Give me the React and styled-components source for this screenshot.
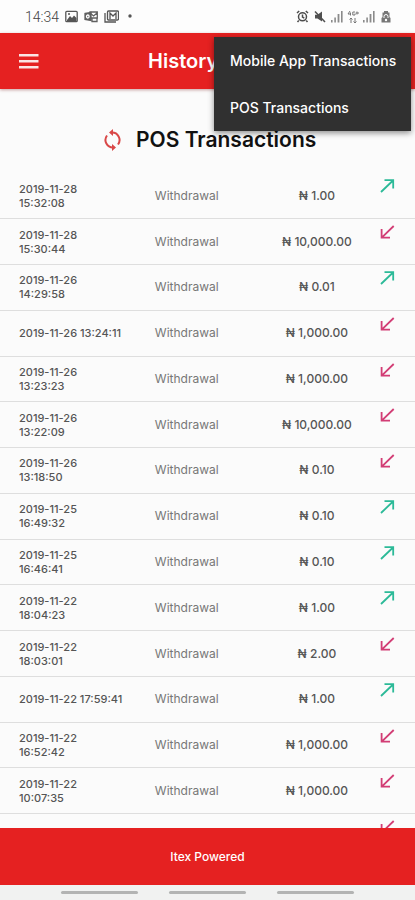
import React from "react";
import styled, { createGlobalStyle } from "styled-components";

const GlobalStyle = createGlobalStyle`
  *, *::before, *::after { box-sizing: border-box; }
  body {
    margin: 0;
    background: #fbfbfb;
    font-family: Inter, "Open Sans", sans-serif;
  }
  button { font: inherit; color: inherit; border: 0; padding: 0; background: none; cursor: pointer; }
`;

const Screen = styled.div`
  display: flex;
  flex-direction: column;
  height: 100vh;
  overflow: hidden;
  background: #fbfbfb;
`;

const StatusBar = styled.div`
  flex: none;
  display: flex;
  align-items: center;
  justify-content: space-between;
  height: 33px;
  padding: 0 22px 0 25px;
  background: #fdfdfd;
  color: #5c5c5c;
`;

const StatusGroup = styled.div`
  display: flex;
  align-items: center;
  gap: ${(p) => p.$gap}px;
`;

const Clock = styled.time`
  width: 34px;
  font: 300 14px/16px Roboto, sans-serif;
  color: #444;
`;

const Header = styled.header`
  position: relative;
  z-index: 1;
  flex: none;
  display: flex;
  align-items: center;
  height: 56px;
  padding: 0 19px;
  background: #e52121;
  color: #fff;
  box-shadow: 0 1px 3px rgba(120, 20, 20, 0.4);
`;

const MenuButton = styled.button`
  display: flex;
  width: 20px;
  height: 20px;
  align-items: center;
`;

const Title = styled.h1`
  margin: 0 0 0 109px;
  font-size: 20px;
  line-height: 24px;
  font-weight: 600;
`;

const Menu = styled.div`
  position: absolute;
  top: 4px;
  right: 4px;
  display: flex;
  flex-direction: column;
  width: 197px;
  background: #303030;
  box-shadow: 0 2px 6px rgba(0, 0, 0, 0.45);
`;

const MenuItem = styled.button`
  height: 47px;
  padding: 0 16px;
  font-size: 14px;
  font-weight: 500;
  text-align: left;
  white-space: nowrap;
`;

const Heading = styled.div`
  flex: none;
  display: flex;
  align-items: center;
  gap: 14px;
  height: 84px;
  padding: 18px 0 0 103px;
`;

const RefreshButton = styled.button`
  display: flex;
`;

const HeadingText = styled.h2`
  margin: 0;
  font-size: 21px;
  line-height: 26px;
  font-weight: 600;
  color: #111;
  white-space: nowrap;
`;

const List = styled.main`
  flex: 1;
  min-height: 0;
  overflow: hidden;
`;

const Table = styled.table`
  width: 100%;
  height: calc(100% + 32px);
  table-layout: fixed;
  border-collapse: collapse;
`;

const Row = styled.tr`
  border-bottom: 1px solid #dedede;
`;

const Cell = styled.td`
  height: 45px;
  padding: 0;
  text-align: center;
  font-size: 12px;
  line-height: 14px;
  font-weight: 500;
  color: #555;
`;

const DateCell = styled(Cell)`
  width: 31%;
  padding-left: 19px;
  text-align: left;
  white-space: nowrap;
  font-size: 11px;
`;

const TypeCell = styled(Cell)`
  width: 28%;
  font-weight: 400;
  color: #777;
`;

const AmountCell = styled(Cell)`
  padding-left: 9px;
`;

const ArrowCell = styled.td`
  width: 35px;
  padding: 6px 0 0;
  vertical-align: top;
`;

const Arrow = styled.svg`
  display: block;
  fill: none;
  stroke: ${(p) => (p.$out ? "#2cba98" : "#d23d75")};
  stroke-width: 1.8;
`;

const Line = styled.span`
  display: block;
`;

const Footer = styled.footer`
  flex: none;
  display: flex;
  align-items: center;
  justify-content: center;
  height: 57px;
  background: #e52121;
  color: #fff;
  font-size: 12px;
  font-weight: 500;
`;

const GestureBar = styled.div`
  flex: none;
  display: flex;
  align-items: center;
  justify-content: center;
  gap: 31px;
  height: 15px;
  background: #f1f2f1;
`;

const Pill = styled.span`
  width: 77px;
  height: 3px;
  border-radius: 2px;
  background: #b3b4b3;
`;

const ROWS = [
  ["2019-11-28", "15:32:08", "1.00", true],
  ["2019-11-28", "15:30:44", "10,000.00", false],
  ["2019-11-26", "14:29:58", "0.01", true],
  ["2019-11-26", "13:24:11", "1,000.00", false, true],
  ["2019-11-26", "13:23:23", "1,000.00", false],
  ["2019-11-26", "13:22:09", "10,000.00", false],
  ["2019-11-26", "13:18:50", "0.10", false],
  ["2019-11-25", "16:49:32", "0.10", true],
  ["2019-11-25", "16:46:41", "0.10", true],
  ["2019-11-22", "18:04:23", "1.00", true],
  ["2019-11-22", "18:03:01", "2.00", false],
  ["2019-11-22", "17:59:41", "1.00", true, true],
  ["2019-11-22", "16:52:42", "1,000.00", false],
  ["2019-11-22", "10:07:35", "1,000.00", false],
];

function DirectionArrow({ out }) {
  return (
    <Arrow $out={out} width="15" height="14" viewBox="0 0 15 14" role="img" aria-label={out ? "Outgoing" : "Incoming"}>
      <path d={out ? "M1 13L13 1.5M4.5 1.2H13.2V9.5" : "M13.7 1L2 12.3M1.6 4V12.7H10"} />
    </Arrow>
  );
}

function Signal() {
  return (
    <svg width="12" height="13" viewBox="0 0 12 13" fill="#8b8b8b" aria-hidden="true">
      <path d="M0 10h1.6v2.5H0zM3.3 7.5h1.6v5H3.3zM6.6 4h1.8v8.5H6.6zM10 1h1.6v11.5H10z" />
    </svg>
  );
}

function StatusIcons() {
  return (
    <StatusGroup $gap={4}>
      <svg width="13" height="13" viewBox="0 0 13 13" fill="none" stroke="#4c4c4c" strokeWidth="1.5" aria-hidden="true">
        <circle cx="6.5" cy="6.8" r="4" />
        <path d="M6.5 4.5v2.6l1.8 1M1 3l2.2-2M12 3L9.8 1M2.8 10.5L1.5 12M10.2 10.5L11.5 12" />
      </svg>
      <svg width="14" height="13" viewBox="-1 0 14 13" aria-hidden="true">
        <path d="M1 4.8h2.500L8 1.500v10L3.500 8.500H1z" fill="#505050" />
        <path d="M1 1.500l10 10.500" stroke="#505050" strokeWidth="1.5" />
      </svg>
      <Signal />
      <svg width="12" height="14" viewBox="0 0 12 14" fill="none" stroke="#777" aria-hidden="true">
        <path d="M3 1L1 4h3M3.5 2.5v3M8 2H5.8v3H8V3.5M10 1.5v3M8.7 3H12" />
        <path d="M4 13V8M2.5 9.5L4 8l1.5 1.5M8 8v5M6.5 11.5L8 13l1.5-1.5" />
      </svg>
      <Signal />
      <svg width="14" height="13" viewBox="-1 0 14 13" aria-hidden="true">
        <path d="M4 1h4v1.500h1.500V7l1 1v4.500h-9V8l1-1V2.500H4z" fill="#777" />
        <path d="M4 8V6.500a2 2 0 0 1 4 0V8" fill="none" stroke="#fff" />
        <circle cx="6" cy="10" r="1.2" fill="#fff" />
      </svg>
    </StatusGroup>
  );
}

function NotificationIcons() {
  return (
    <StatusGroup $gap={6}>
      <Clock>14:34</Clock>
      <svg width="13" height="13" viewBox="0 0 13 13" aria-hidden="true">
        <rect x="0.8" y="1.3" width="11.4" height="10.4" rx="1" fill="none" stroke="#555" strokeWidth="1.3" />
        <path d="M2 10l3-4 2 2 2-2.500 2.500 2.500V11H2z" fill="#555" />
        <circle cx="4" cy="4" r="1" fill="#555" />
      </svg>
      <svg width="14" height="13" viewBox="0 0 14 13" fill="none" stroke="#606060" strokeWidth="1.3" aria-hidden="true">
        <path d="M6 2h7.300v6H6zM6 3l3.600 3L13 3M8 8v3.500h5V8" />
        <path d="M1 3.500l6-1v8l-6-1z" fill="#606060" />
        <ellipse cx="3.8" cy="6.5" rx="1.3" ry="1.5" stroke="#fff" />
      </svg>
      <svg width="15" height="13" viewBox="0 0 15 13" fill="none" stroke="#555" strokeWidth="1.3" aria-hidden="true">
        <rect x="3.5" y="1" width="11" height="9" rx="1" />
        <path d="M1 3v9h11M6 9V3l3 3 3-3v6" />
      </svg>
      <svg width="15" height="13" viewBox="0 0 15 13" aria-hidden="true">
        <circle cx="5" cy="6" r="1.7" fill="#555" />
      </svg>
    </StatusGroup>
  );
}

export default function App() {
  return (
    <Screen>
      <GlobalStyle />
      <StatusBar>
        <NotificationIcons />
        <StatusIcons />
      </StatusBar>
      <Header>
        <MenuButton aria-label="Open navigation">
          <svg width="20" height="15" viewBox="0 0 20 15" fill="#fbe4e4">
            <path d="M0 0h19.500v2.500H0zM0 6h19.500v2.500H0zM0 12h19.500v2.500H0z" />
          </svg>
        </MenuButton>
        <Title>History</Title>
        <Menu role="menu">
          <MenuItem role="menuitem">Mobile App Transactions</MenuItem>
          <MenuItem role="menuitem">POS Transactions</MenuItem>
        </Menu>
      </Header>
      <Heading>
        <RefreshButton aria-label="Refresh">
          <svg width="19" height="22" viewBox="0 0 19 22" fill="none" stroke="#d94848" strokeWidth="2">
            <path d="M8.5 3.5A7.5 7.5 0 0 1 15 15.5M10.5 18.5A7.5 7.5 0 0 1 4 6.5" />
            <path d="M10 0v7L6 3.500zM9 15v7l4-3.500z" fill="#d94848" stroke="none" />
          </svg>
        </RefreshButton>
        <HeadingText>POS Transactions</HeadingText>
      </Heading>
      <List>
        <Table aria-label="POS Transactions">
          <tbody>
            {ROWS.map(([date, time, amount, out, single]) => (
              <Row key={date + time}>
                <DateCell>
                  {single ? (
                    `${date} ${time}`
                  ) : (
                    <>
                      <Line>{date}</Line>
                      <Line>{time}</Line>
                    </>
                  )}
                </DateCell>
                <TypeCell>Withdrawal</TypeCell>
                <AmountCell>₦ {amount}</AmountCell>
                <ArrowCell>
                  <DirectionArrow out={out} />
                </ArrowCell>
              </Row>
            ))}
            <Row>
              <DateCell />
              <TypeCell />
              <AmountCell />
              <ArrowCell>
                <DirectionArrow out={false} />
              </ArrowCell>
            </Row>
          </tbody>
        </Table>
      </List>
      <Footer>Itex Powered</Footer>
      <GestureBar>
        <Pill />
        <Pill />
        <Pill />
      </GestureBar>
    </Screen>
  );
}
